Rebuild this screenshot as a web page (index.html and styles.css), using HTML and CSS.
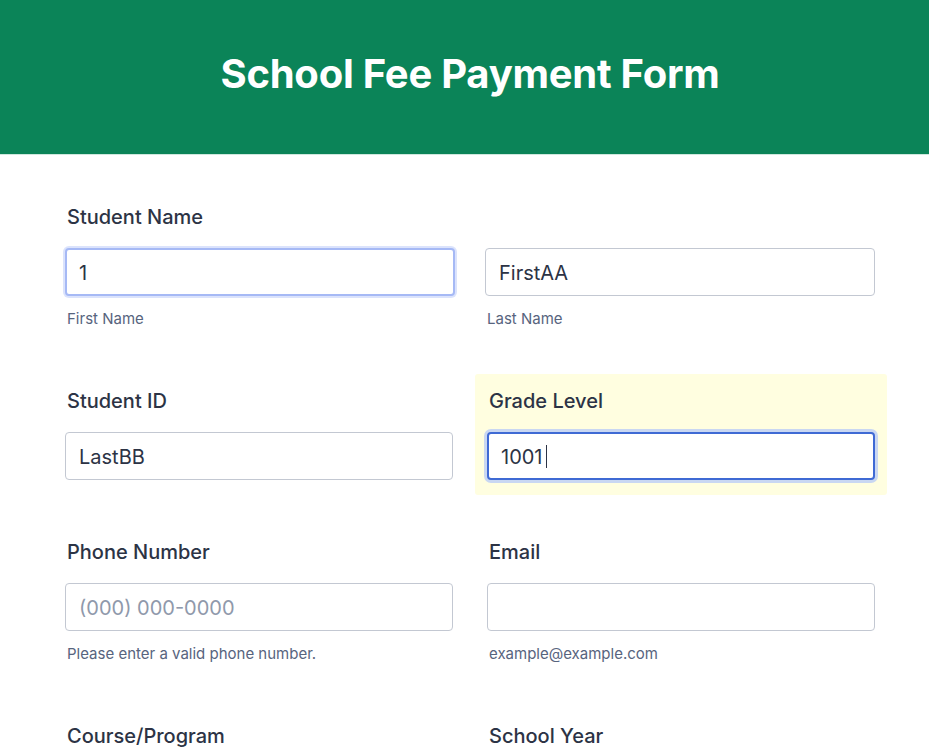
FILE: index.html
```html
<!DOCTYPE html>
<html lang="en">
<head>
<meta charset="utf-8">
<title>School Fee Payment Form</title>
<link rel="stylesheet" href="styles.css">
</head>
<body>
<div class="page">
  <header class="header">
    <h1 class="title">School Fee Payment Form</h1>
  </header>
  <main class="form">
    <div class="field field-full">
      <label class="label">Student Name</label>
      <div class="split">
        <div class="sub">
          <input class="input input-soft" type="text" value="1">
          <span class="sublabel">First Name</span>
        </div>
        <div class="sub">
          <input class="input" type="text" value="FirstAA">
          <span class="sublabel">Last Name</span>
        </div>
      </div>
    </div>

    <div class="field">
      <label class="label">Student ID</label>
      <input class="input" type="text" value="LastBB">
    </div>
    <div class="field field-active">
      <label class="label">Grade Level</label>
      <div class="input-wrap">
        <input class="input input-focus" type="text" value="1001">
        <span class="caret"></span>
      </div>
    </div>

    <div class="field">
      <label class="label">Phone Number</label>
      <input class="input" type="text" placeholder="(000) 000-0000">
      <span class="sublabel">Please enter a valid phone number.</span>
    </div>
    <div class="field">
      <label class="label">Email</label>
      <input class="input" type="text">
      <span class="sublabel">example@example.com</span>
    </div>

    <div class="field">
      <label class="label">Course/Program</label>
      <input class="input" type="text">
    </div>
    <div class="field">
      <label class="label">School Year</label>
      <input class="input" type="text">
    </div>
  </main>
</div>
</body>
</html>
```

FILE: styles.css
```css
html {
  overflow-x: hidden;
}

body {
  margin: 0;
  background: #ffffff;
  font-family: Inter, "Noto Sans", "Liberation Sans", sans-serif;
  color: #2c3345;
}

.page {
  width: 940px;
}

.header {
  height: 154px;
  background: #0b8458;
  border-bottom: 1px solid #cfe8de;
  box-sizing: content-box;
  text-align: center;
}

.title {
  margin: 0;
  padding-top: 50px;
  font-size: 40px;
  line-height: 48px;
  font-weight: 700;
  color: #ffffff;
  letter-spacing: -0.25px;
}

.form {
  display: grid;
  grid-template-columns: 1fr 1fr;
  column-gap: 10px;
  row-gap: 30px;
  padding: 35px 53px 40px;
}

.field {
  display: flex;
  flex-direction: column;
  padding: 14px 12px 15px;
  border-radius: 3px;
}

.field-full {
  grid-column: 1 / -1;
}

.field-active {
  background: #fffee0;
}

.label {
  font-size: 20px;
  line-height: 24px;
  font-weight: 500;
  color: #2c3345;
  margin-bottom: 19px;
  padding-left: 2px;
  padding-top: 1px;
}

.split {
  display: grid;
  grid-template-columns: 1fr 1fr;
  column-gap: 30px;
}

.sub {
  display: flex;
  flex-direction: column;
}

.input {
  box-sizing: border-box;
  width: 100%;
  height: 48px;
  margin: 0;
  padding: 1px 13px 0;
  border: 1px solid #c3c8d2;
  border-radius: 4px;
  background: #ffffff;
  font-family: Inter, "Noto Sans", "Liberation Sans", sans-serif;
  font-size: 20px;
  color: #2c3345;
  outline: none;
}

.input::placeholder {
  color: #8f99ab;
}

.input-soft {
  border: 2px solid #a6b9f5;
  padding: 1px 12px 0;
  box-shadow: 0 0 0 2px rgba(176, 194, 248, 0.45);
}

.input-wrap {
  position: relative;
}

.input-focus {
  border: 2px solid #3f6ad4;
  padding: 1px 12px 0;
  box-shadow: 0 0 0 3px #c9d7f2;
}

.caret {
  position: absolute;
  left: 59px;
  top: 13px;
  width: 1px;
  height: 23px;
  background: #2c3345;
}

.sublabel {
  margin-top: 13px;
  font-size: 15px;
  line-height: 20px;
  color: #57647e;
  padding-left: 2px;
}
```
